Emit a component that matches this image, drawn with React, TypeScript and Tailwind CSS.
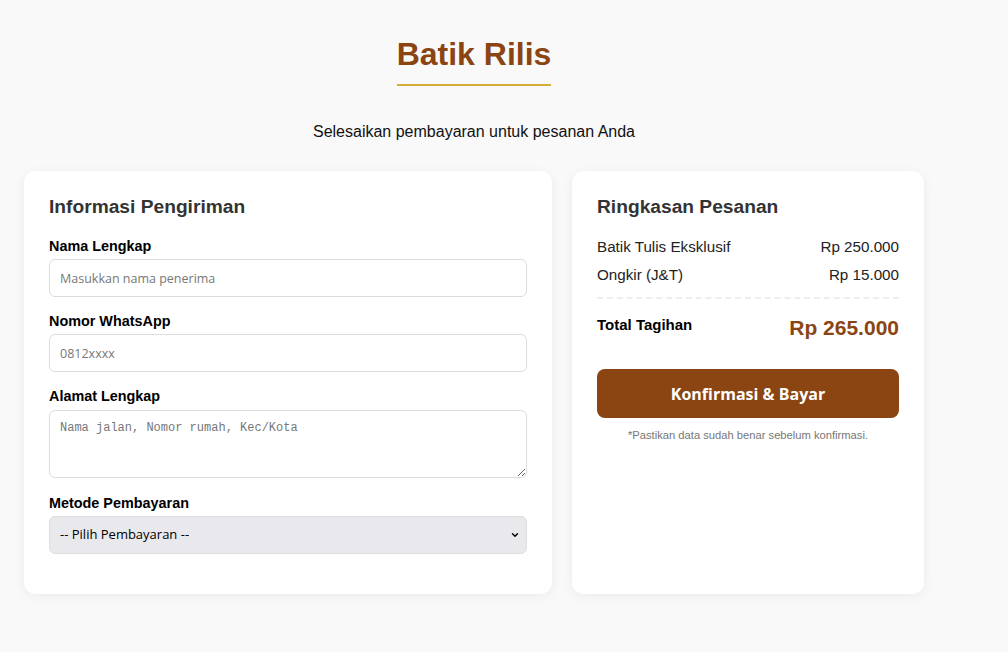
import { ChevronDown } from "lucide-react";

const inputCls =
  "w-full h-[38px] px-[10px] border border-[#ddd] rounded-[6px] bg-white text-[12.5px] text-[#222] placeholder:text-[#777] outline-none [font-family:'Open_Sans',sans-serif]";

function Field({ label, children }: { label: string; children: React.ReactNode }) {
  return (
    <div className="flex flex-col gap-[4px]">
      <label className="text-[14.4px] font-bold text-black leading-[18px]">{label}</label>
      {children}
    </div>
  );
}

function ShippingForm() {
  return (
    <section className="bg-white rounded-[12px] shadow-[0_2px_12px_rgba(0,0,0,0.06)] px-[25px] pt-[23px] pb-[40px]">
      <h2 className="text-[19.2px] font-bold text-[#333] leading-[26px] mb-[17px]">
        Informasi Pengiriman
      </h2>
      <div className="flex flex-col gap-[15px]">
        <Field label="Nama Lengkap">
          <input className={inputCls} placeholder="Masukkan nama penerima" />
        </Field>
        <Field label="Nomor WhatsApp">
          <input className={inputCls} placeholder="0812xxxx" />
        </Field>
        <Field label="Alamat Lengkap">
          <textarea
            className="w-full h-[68px] mt-[1px] mb-[1px] px-[10px] py-[9px] border border-[#ddd] rounded-[6px] bg-white text-[12px] leading-[16px] text-[#222] placeholder:text-[#777] outline-none block [font-family:'Liberation_Mono',monospace]"
            placeholder="Nama jalan, Nomor rumah, Kec/Kota"
          />
        </Field>
        <Field label="Metode Pembayaran">
          <div className="relative">
            <select className="w-full h-[38px] pl-[10px] pr-8 border border-[#ddd] rounded-[6px] bg-[#e9e9ed] text-[13px] text-black appearance-none outline-none [font-family:'Open_Sans',sans-serif]">
              <option>-- Pilih Pembayaran --</option>
              <option>Transfer Bank</option>
              <option>COD</option>
            </select>
            <ChevronDown
              size={10}
              strokeWidth={3.5}
              className="absolute right-[7px] top-[14px] text-black pointer-events-none"
            />
          </div>
        </Field>
      </div>
    </section>
  );
}

function OrderSummary() {
  return (
    <section className="bg-white rounded-[12px] shadow-[0_2px_12px_rgba(0,0,0,0.06)] px-[25px] pt-[23px] pb-[25px]">
      <h2 className="text-[19.2px] font-bold text-[#333] leading-[26px] mb-[18px]">
        Ringkasan Pesanan
      </h2>
      <div className="flex justify-between text-[15.2px] text-[#222] leading-[18px] mb-[10px]">
        <span>Batik Tulis Eksklusif</span>
        <span>Rp 250.000</span>
      </div>
      <div className="flex justify-between text-[15.2px] text-[#222] leading-[18px]">
        <span>Ongkir (J&amp;T)</span>
        <span>Rp 15.000</span>
      </div>
      <div className="border-t-2 border-dashed border-[#eee] mt-[13px] mb-[15px]" />
      <div className="flex justify-between items-start">
        <span className="text-[15px] font-bold text-black leading-[20px] pt-[1px]">Total Tagihan</span>
        <span className="text-[21px] font-bold text-[#8b4513] leading-[26px] pt-[1px]">Rp 265.000</span>
      </div>
      <button className="mt-[28px] w-full h-[49px] rounded-[8px] bg-[#8b4513] text-white text-[16px] font-bold [font-family:'Open_Sans',sans-serif]">
        Konfirmasi &amp; Bayar
      </button>
      <p className="mt-[10px] text-center text-[11.2px] text-[#777] leading-[14px]">
        *Pastikan data sudah benar sebelum konfirmasi.
      </p>
    </section>
  );
}

export default function App() {
  return (
    <div className="min-h-[652px] bg-[#f9f9f9] text-[#222] [font-family:'Liberation_Sans',Arial,sans-serif] pt-[34px]">
      <div className="w-[900px] ml-[24px]">
        <header className="flex flex-col items-center">
          <h1 className="text-[32px] font-bold text-[#8b4513] leading-[40px] pb-[10px] border-b-2 border-[#d4af37]">
            Batik Rilis
          </h1>
          <p className="mt-[36px] text-[16px] text-[#111] leading-[20px]">
            Selesaikan pembayaran untuk pesanan Anda
          </p>
        </header>
        <div className="grid grid-cols-[3fr_2fr] gap-[20px] mt-[29px] items-stretch">
          <ShippingForm />
          <OrderSummary />
        </div>
      </div>
    </div>
  );
}
